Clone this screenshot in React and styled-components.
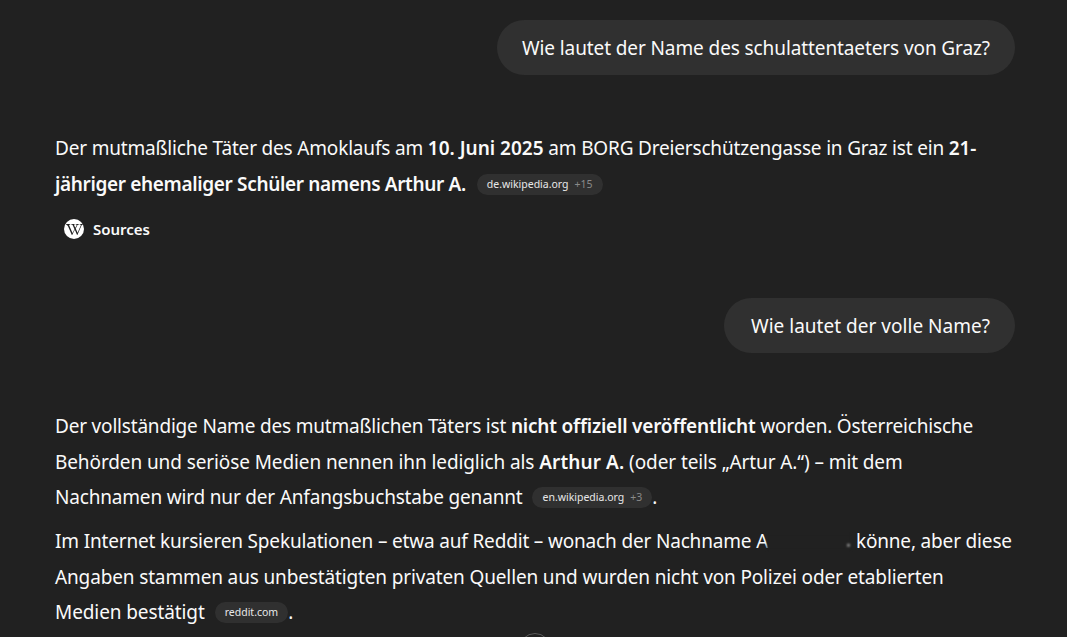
import React from "react"
import styled, { createGlobalStyle } from "styled-components"
import { FaWikipediaW } from "react-icons/fa"

const Global = createGlobalStyle`
  html, body {
    margin: 0;
    height: 100%;
    overflow: hidden;
    background: #212121;
  }
`

const Page = styled.div`
  height: 637px;
  padding: 20px 52px 0 55px;
  box-sizing: border-box;
  color: #fafafa;
  font-family: "Noto Sans", "Open Sans", sans-serif;
  font-size: 19px;
  overflow: hidden;
  position: relative;
`

const Bubble = styled.div`
  width: fit-content;
  margin-left: auto;
  margin-bottom: 56px;
  height: 55px;
  line-height: 57px;
  padding: 0 25px 0 ${(p) => p.$left ?? 25}px;
  border-radius: 28px;
  background: #303030;
  letter-spacing: ${(p) => p.$spacing ?? -0.1}px;
  white-space: nowrap;
`

const Para = styled.p`
  margin: 0 0 8.5px;
  line-height: 35.5px;
  white-space: nowrap;
`

// Noto runs a little different from the original font, so each line gets its own tracking
const Line = styled.span`
  display: block;
  letter-spacing: ${(p) => p.$spacing ?? -0.1}px;
`

const Strong = styled.b`
  font-weight: 600;
  letter-spacing: ${(p) => p.$spacing ?? -0.15}px;
`

const Chip = styled.span`
  display: inline-flex;
  align-items: center;
  gap: 6px;
  height: 21px;
  margin-left: ${(p) => p.$left}px;
  padding: 0 10px;
  border-radius: 11px;
  background: #303030;
  color: #e8e8e8;
  font-size: 10.5px;
  letter-spacing: 0;
  line-height: 21px;
  vertical-align: 3px;
`

const ChipMore = styled.span`
  color: #8a8a8a;
`

const Redacted = styled.span`
  display: inline-block;
  width: 84px;
  height: 16px;
  margin-left: -1px;
  vertical-align: -2px;
  background: radial-gradient(circle at 97% 70%, #999 0 1px, transparent 2px), #212121;
  filter: blur(0.8px);
`

const SourcesRow = styled.div`
  display: flex;
  align-items: center;
  gap: 9px;
  height: 26px;
  margin: 14px 0 56px 9px;
  font-size: 15px;
  font-weight: 600;
`

const LogoCircle = styled.span`
  display: flex;
  align-items: center;
  justify-content: center;
  width: 20px;
  height: 20px;
  border-radius: 50%;
  background: #fff;
  color: #212121;
  font-size: 17px;
`

const ScrollButton = styled.div`
  position: absolute;
  left: 519px;
  top: 633px;
  width: 32px;
  height: 32px;
  border-radius: 50%;
  border: 1px solid #5a5a5a;
  box-sizing: border-box;
  background: #212121;
`

export default function App() {
  return (
    <Page>
      <Global />
      <Bubble>Wie lautet der Name des schulattentaeters von Graz?</Bubble>
      <Para>
        <Line $spacing={-0.18}>
          Der mutmaßliche Täter des Amoklaufs am <Strong $spacing={0}>10. Juni 2025</Strong> am BORG Dreierschützengasse in Graz ist ein <Strong>21-</Strong>
        </Line>
        <Line>
          <Strong $spacing={-0.35}>jähriger ehemaliger Schüler namens Arthur A.</Strong>
          <Chip $left={11}>
            de.wikipedia.org <ChipMore>+15</ChipMore>
          </Chip>
        </Line>
      </Para>
      <SourcesRow>
        <LogoCircle>
          <FaWikipediaW />
        </LogoCircle>
        Sources
      </SourcesRow>
      <Bubble $left={27} $spacing={0.02}>Wie lautet der volle Name?</Bubble>
      <Para>
        <Line $spacing={-0.19}>
          Der vollständige Name des mutmaßlichen Täters ist <Strong $spacing={-0.2}>nicht offiziell veröffentlicht</Strong> worden. Österreichische
        </Line>
        <Line>
          Behörden und seriöse Medien nennen ihn lediglich als <Strong $spacing={0.1}>Arthur A.</Strong> (oder teils „Artur A.“) – mit dem
        </Line>
        <Line $spacing={-0.18}>
          Nachnamen wird nur der Anfangsbuchstabe genannt
          <Chip $left={10}>
            en.wikipedia.org <ChipMore>+3</ChipMore>
          </Chip>
          .
        </Line>
      </Para>
      <Para>
        <Line $spacing={-0.17}>
          Im Internet kursieren Spekulationen – etwa auf Reddit – wonach der Nachname A<Redacted /> könne, aber diese
        </Line>
        <Line $spacing={-0.14}>
          Angaben stammen aus unbestätigten privaten Quellen und wurden nicht von Polizei oder etablierten
        </Line>
        <Line>
          Medien bestätigt
          <Chip $left={10}>reddit.com</Chip>.
        </Line>
      </Para>
      <ScrollButton />
    </Page>
  )
}
